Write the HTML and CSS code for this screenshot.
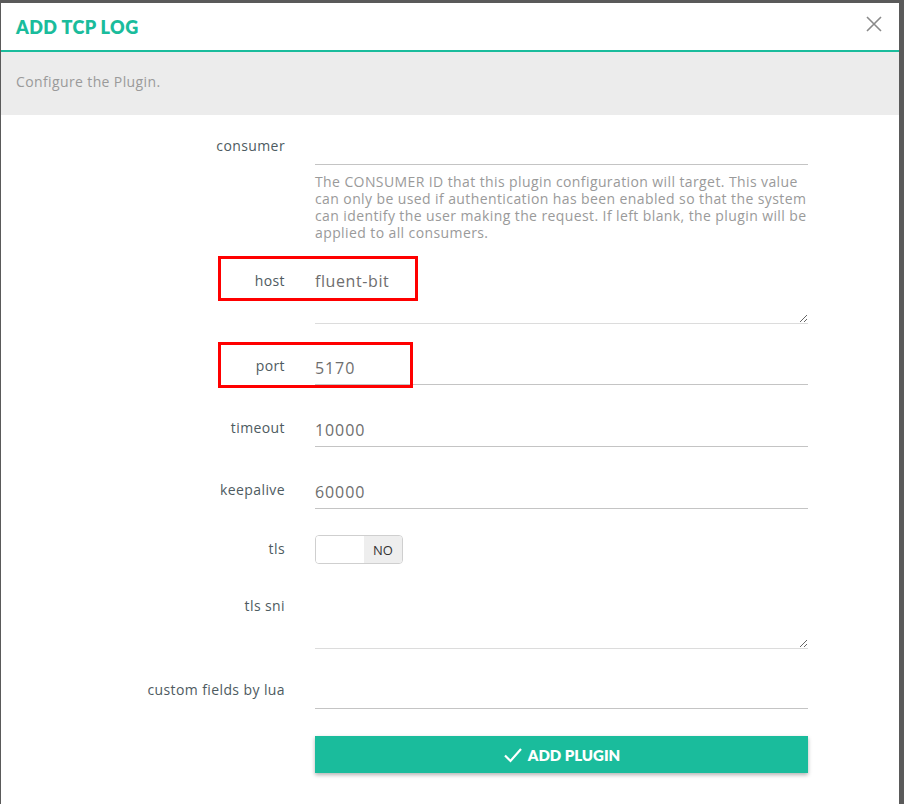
FILE: index.html
```html
<!DOCTYPE html>
<html>
<head>
<meta charset="utf-8">
<link rel="stylesheet" href="styles.css">
</head>
<body>
<div class="backdrop">
  <div class="modal">
    <div class="modal-header">
      <h1 class="modal-title">ADD TCP LOG</h1>
      <button class="close" aria-label="close">
        <svg width="16" height="16" viewBox="0 0 16 16"><path d="M1 1 L15 15 M15 1 L1 15" stroke="#8a8a8a" stroke-width="1.6" fill="none"/></svg>
      </button>
    </div>
    <div class="modal-intro">Configure the Plugin.</div>
    <form class="form">
      <div class="row row-consumer">
        <label class="label">consumer</label>
        <div class="field">
          <input class="input" type="text" value="">
          <p class="help">The CONSUMER ID that this plugin configuration will target. This value can only be used if authentication has been enabled so that the system can identify the user making the request. If left blank, the plugin will be applied to all consumers.</p>
        </div>
      </div>
      <div class="row row-host">
        <label class="label">host</label>
        <div class="field">
          <textarea class="textarea">fluent-bit</textarea>
        </div>
        <span class="mark mark-host"></span>
      </div>
      <div class="row row-port">
        <label class="label">port</label>
        <div class="field">
          <input class="input" type="text" value="5170">
        </div>
        <span class="mark mark-port"></span>
      </div>
      <div class="row">
        <label class="label">timeout</label>
        <div class="field">
          <input class="input" type="text" value="10000">
        </div>
      </div>
      <div class="row row-keepalive">
        <label class="label">keepalive</label>
        <div class="field">
          <input class="input" type="text" value="60000">
        </div>
      </div>
      <div class="row row-tls">
        <label class="label label-tls">tls</label>
        <div class="field">
          <div class="toggle"><span class="toggle-on"></span><span class="toggle-off">NO</span></div>
        </div>
      </div>
      <div class="row row-sni">
        <label class="label">tls sni</label>
        <div class="field">
          <textarea class="textarea"></textarea>
        </div>
      </div>
      <div class="row row-lua">
        <label class="label">custom fields by lua</label>
        <div class="field">
          <input class="input" type="text" value="">
        </div>
      </div>
      <div class="row">
        <div class="label"></div>
        <div class="field">
          <button type="button" class="submit">
            <svg width="20" height="16" viewBox="0 0 20 16"><path d="M2 8.5 L7.5 14 L18 2" stroke="#fff" stroke-width="2.2" fill="none"/></svg>
            <span>ADD PLUGIN</span>
          </button>
        </div>
      </div>
    </form>
  </div>
</div>
</body>
</html>
```
FILE: styles.css
```css
html, body {
  margin: 0;
  padding: 0;
  height: 100%;
  overflow: hidden;
}
body {
  background: #5a5a5a;
  font-family: "Open Sans", "Noto Sans", sans-serif;
}
.backdrop {
  padding: 3px 0 0 1px;
}
.modal {
  width: 898px;
  height: 820px;
  background: #fff;
}
.modal-header {
  height: 47px;
  border-bottom: 2px solid #1abc9c;
  display: flex;
  align-items: center;
  justify-content: space-between;
  padding: 0 16px 0 15px;
}
.modal-title {
  margin: 0;
  font-family: "Lato", sans-serif;
  font-size: 18px;
  font-weight: 800;
  color: #1abc9c;
  letter-spacing: 0.4px;
}
.close {
  background: none;
  border: none;
  padding: 0;
  margin-top: -6px;
  width: 18px;
  height: 18px;
  display: flex;
  align-items: center;
  justify-content: center;
}
.modal-intro {
  height: 58px;
  padding-bottom: 5px;
  background: #ececec;
  color: #9a9a9a;
  font-size: 14px;
  letter-spacing: 0.38px;
  padding-left: 15px;
  display: flex;
  align-items: center;
}
.form {
  padding-top: 16px;
}
.row {
  display: flex;
  position: relative;
  margin-bottom: 28px;
}
.row-consumer {
  margin-bottom: 25px;
}
.label {
  flex: 0 0 284px;
  text-align: right;
  font-size: 14px;
  letter-spacing: 0.4px;
  line-height: 20px;
  padding-top: 5px;
  color: #4e5b61;
}
.field {
  margin-left: 30px;
  width: 493px;
}
.input {
  display: block;
  box-sizing: border-box;
  width: 100%;
  height: 34px;
  border: none;
  border-bottom: 1px solid #c4c4c4;
  padding: 0;
  font-family: inherit;
  font-size: 16px;
  letter-spacing: 0.9px;
  color: #6e6e6e;
  outline: none;
}
.textarea {
  display: block;
  box-sizing: border-box;
  width: 100%;
  height: 58px;
  border: none;
  border-bottom: 1px solid #dcdcdc;
  padding: 5px 0 0 0;
  font-family: inherit;
  font-size: 16px;
  letter-spacing: 0.6px;
  line-height: 20px;
  color: #6e6e6e;
  outline: none;
  resize: vertical;
}
.help {
  margin: 8px 0 0 0;
  font-size: 14px;
  letter-spacing: 0.4px;
  line-height: 17px;
  color: #9a9a9a;
}
.row-host {
  margin-bottom: 27px;
}
.mark {
  position: absolute;
  border: 3px solid #ff0000;
  box-sizing: border-box;
  pointer-events: none;
}
.mark-host {
  left: 217px;
  top: -10px;
  width: 200px;
  height: 45px;
}
.mark-port {
  left: 217px;
  top: -9px;
  width: 195px;
  height: 46px;
}
.row-keepalive {
  margin-bottom: 26px;
}
.row-tls {
  margin-bottom: 27px;
}
.label-tls {
  padding-top: 4px;
}
.toggle {
  display: flex;
  width: 88px;
  height: 29px;
  box-sizing: border-box;
  border: 1px solid #cfcfcf;
  border-radius: 4px;
  overflow: hidden;
}
.toggle-on {
  width: 48px;
  background: #fff;
}
.toggle-off {
  flex: 1;
  background: #eeeeee;
  font-size: 13px;
  color: #333;
  display: flex;
  align-items: center;
  justify-content: center;
}
.row-sni {
  margin-bottom: 26px;
}
.row-lua {
  margin-bottom: 27px;
}
.submit {
  width: 100%;
  height: 37px;
  border: none;
  background: #1abc9c;
  color: #fff;
  font-family: "Lato", sans-serif;
  font-size: 15px;
  font-weight: 800;
  display: flex;
  align-items: center;
  justify-content: center;
  gap: 5px;
  box-shadow: 0 2px 4px rgba(0, 0, 0, 0.3);
  padding: 0;
}
```
